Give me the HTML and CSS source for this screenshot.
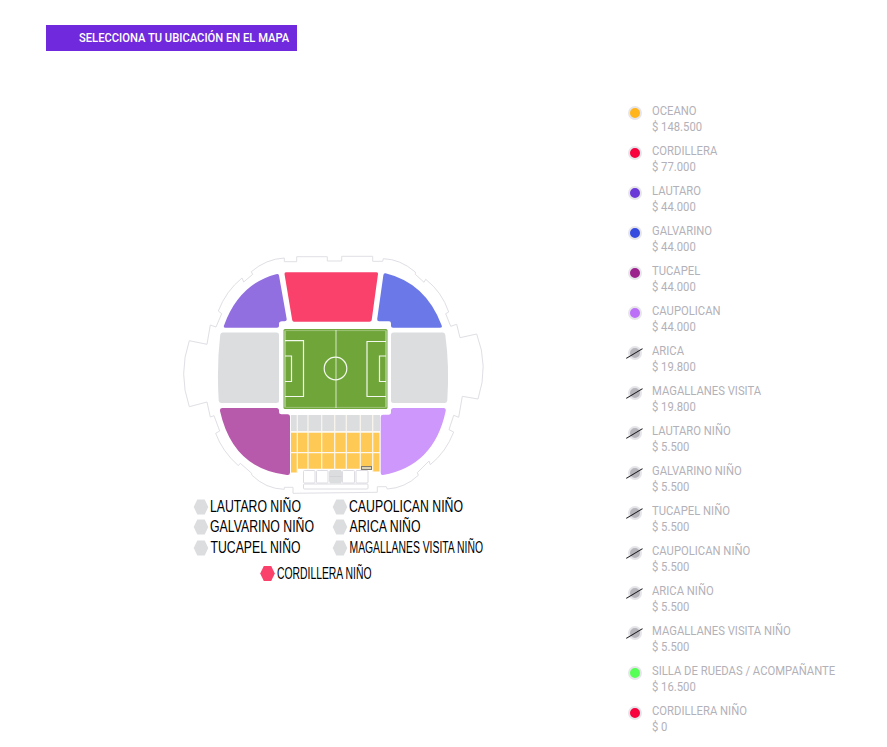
FILE: index.html
```html
<!DOCTYPE html>
<html lang="es">
<head>
<meta charset="utf-8">
<title>Selecciona tu ubicación</title>
<link rel="stylesheet" href="styles.css">
</head>
<body>
<h1 class="banner"><span class="cond">SELECCIONA TU UBICACIÓN EN EL MAPA</span></h1>
<main class="content">
<svg class="map" viewBox="180 250 310 340" width="310" height="340">
  <path class="outline" d="M341.7 261H327.3V256.7H296.7V261.7H284.3V258Q266 259 251.3 271.7L252.7 274.3L243.7 282L242 278Q226 291 218.3 311L221.7 313.7L216 327L210.3 325L207 344.3L189.3 340.7Q178 374 189.3 406.7L207 402L210.3 417L214 415.7L219.7 431L215.7 433.3Q222 451 238.3 465.7L240.3 463.3L251.7 473.3V475Q266 489 284.3 489.3V487.3H293V493.3L377.3 492.3V486.7H386.3L387.3 489Q405 488 418.3 475.3L417.3 472.7L429 461L430.3 464.7Q446 452 453.7 432L449 429.7L453.7 415.3L458.7 417.3L462.3 396.3L478 399Q489 366 476.7 334L460 337.7L456.7 324.3L450.7 326.3L445.7 313.7L448.7 312Q442 292 425.7 279.3L424 282.3L415.3 274.3V272Q400 259 383.3 258.7L382.7 261.3H372.7V256.3H341.7Z"/>
  <path fill="#926fe1" d="M276 274.2Q278.600 273.500 279 275.500L286.700 319Q287 321.300 284.500 321.300H282Q279 321.300 279 324V326Q279 327.700 277 327.700H225.500Q223.200 327.700 224 325.500Q239 284 276 274.200Z"/>
  <path fill="#f9416c" d="M286 272.300H376.500Q378.300 272.300 378 274L371.700 320Q371.400 321.700 369.500 321.700H294Q292.500 321.700 292.200 320L284.500 274Q284.300 272.300 286 272.300Z"/>
  <path fill="#6b78e8" d="M385.500 273.200Q383.700 272.800 383.400 275L377.200 319Q377 321.300 379 321.300H389Q391 321.300 391 323.500V326Q391 327.700 393 327.700H440Q442.500 327.700 441.700 325.500Q426 283 385.500 273.200Z"/>
  <path fill="#dcdddf" d="M222.500 332.500H276.500Q279 332.500 279 335V400.500Q279 403 276.500 403H221.500Q219 403 218.700 400.500Q216.600 366 220.200 335Q220.500 332.500 222.500 332.500Z"/>
  <path fill="#dcdddf" d="M393.500 332.500H443Q445 332.500 445.300 335Q449.600 366 447.300 400.500Q447 403 444.500 403H393.500Q391 403 391 400.500V335Q391 332.500 393.500 332.500Z"/>
  <path fill="#b85aab" d="M222.500 408H276.500Q279 408 279 410.500V412Q279 414.300 281.500 414.300H287.500Q290 414.300 290 417V472.500Q290 475.500 287 475Q233 469 220 411Q219.700 408 222.500 408Z"/>
  <path fill="#ce97fc" d="M393.500 408H443.500Q446.200 408 445.700 411Q434 466 383 475Q380.700 475.300 380.700 472.500V417Q380.700 414.700 383 414.700H388.500Q391 414.700 391 412V410.500Q391 408 393.500 408Z"/>

  <rect x="283.500" y="329" width="104" height="80" rx="1.500" fill="#70a53a"/>
  <g class="pitch">
    <rect x="285" y="330.500" width="101" height="77" opacity=".3"/>
    <path opacity=".65" d="M336 330V408"/>
    <circle cx="335.500" cy="368.500" r="11.300"/>
    <path d="M285 340.700H303.500V396.500H285M285 356H291.500V381.500H285M386 341.500H367V396.500H386M386 356H379.500V381.500H386"/>
    <path opacity=".4" d="M285 331V407M386 331V407"/>
  </g>

  <path fill="#dcdddf" d="M291 415H380V431H291Z"/>
  <path fill="#ffc955" d="M291 432.500H379.500V471.500H373V468.700H297V472.500H291Z"/>
  <path class="seams" d="M297.300 415V473M308 415V470M321.700 415V470M334.700 415V470M346.300 415V470M360.300 415V470M372.700 415V472M290 431.800H380M290 452.700H380"/>
  <rect x="361.500" y="466.500" width="10" height="3" fill="#d9d2b8" stroke="#807b6d"/>
  <g class="boxes">
    <rect x="303.500" y="470.500" width="11.500" height="12.500" rx="1"/>
    <rect x="316.500" y="470.500" width="11.500" height="12.500" rx="1"/>
    <rect x="342.500" y="470.500" width="12" height="12.500" rx="1"/>
    <rect x="356" y="470.500" width="12" height="12.500" rx="1"/>
    <rect x="303.500" y="484" width="64.500" height="5" rx="1"/>
  </g>
  <path fill="#dcdddf" d="M330 470H341L342 472V481L341 483.500H330L329 481V472Z"/>
  <path stroke="#cfcfd4" stroke-width=".7" d="M329.500 476.500H341.500"/>

  <g fill="#dcdddf">
    <path id="hex" d="M197.300 499.500H204.700L208.300 507L204.700 514.500H197.300L193.700 507Z"/>
    <use href="#hex" y="20"/><use href="#hex" y="41"/>
    <use href="#hex" x="139"/><use href="#hex" x="139" y="20"/><use href="#hex" x="139" y="41"/>
  </g>
  <path fill="#f9416c" d="M263.800 566H271.200L274.800 573.500L271.200 581H263.800L260.200 573.500Z"/>
  <g class="labels">
    <text x="210" y="512" textLength="91" lengthAdjust="spacingAndGlyphs">LAUTARO NIÑO</text>
    <text x="210" y="532" textLength="104" lengthAdjust="spacingAndGlyphs">GALVARINO NIÑO</text>
    <text x="210.500" y="553" textLength="90" lengthAdjust="spacingAndGlyphs">TUCAPEL NIÑO</text>
    <text x="349" y="512" textLength="114" lengthAdjust="spacingAndGlyphs">CAUPOLICAN NIÑO</text>
    <text x="349.500" y="532" textLength="71" lengthAdjust="spacingAndGlyphs">ARICA NIÑO</text>
    <text x="349.500" y="553" textLength="133.500" lengthAdjust="spacingAndGlyphs">MAGALLANES VISITA NIÑO</text>
    <text x="277" y="579" textLength="94.500" lengthAdjust="spacingAndGlyphs">CORDILLERA NIÑO</text>
  </g>
</svg>
<ul class="legend">
  <li><i class="dot oceano"></i><div class="cond">OCEANO<br>$ 148.500</div></li>
  <li><i class="dot cordillera"></i><div class="cond">CORDILLERA<br>$ 77.000</div></li>
  <li><i class="dot lautaro"></i><div class="cond">LAUTARO<br>$ 44.000</div></li>
  <li><i class="dot galvarino"></i><div class="cond">GALVARINO<br>$ 44.000</div></li>
  <li><i class="dot tucapel"></i><div class="cond">TUCAPEL<br>$ 44.000</div></li>
  <li><i class="dot caupolican"></i><div class="cond">CAUPOLICAN<br>$ 44.000</div></li>
  <li><i class="dot off"></i><div class="cond">ARICA<br>$ 19.800</div></li>
  <li><i class="dot off"></i><div class="cond">MAGALLANES VISITA<br>$ 19.800</div></li>
  <li><i class="dot off"></i><div class="cond">LAUTARO NIÑO<br>$ 5.500</div></li>
  <li><i class="dot off"></i><div class="cond">GALVARINO NIÑO<br>$ 5.500</div></li>
  <li><i class="dot off"></i><div class="cond">TUCAPEL NIÑO<br>$ 5.500</div></li>
  <li><i class="dot off"></i><div class="cond">CAUPOLICAN NIÑO<br>$ 5.500</div></li>
  <li><i class="dot off"></i><div class="cond">ARICA NIÑO<br>$ 5.500</div></li>
  <li><i class="dot off"></i><div class="cond">MAGALLANES VISITA NIÑO<br>$ 5.500</div></li>
  <li><i class="dot silla"></i><div class="cond">SILLA DE RUEDAS / ACOMPAÑANTE<br>$ 16.500</div></li>
  <li><i class="dot cordillera"></i><div class="cond">CORDILLERA NIÑO<br>$ 0</div></li>
</ul>
</main>
</body>
</html>
```
FILE: styles.css
```css
* { box-sizing: border-box; }
body {
  margin: 0;
  padding: 25px 0 0 46px;
  height: 747px;
  overflow: hidden;
  background: #fff;
  font-family: Roboto, "Liberation Sans", sans-serif;
}
.cond {
  display: inline-block;
  transform: scaleX(.866);
  transform-origin: 0 50%;
  white-space: nowrap;
}
.banner {
  margin: 0;
  width: 251px;
  height: 26px;
  padding-left: 32.5px;
  background: #7029dc;
  color: #fff;
  font-size: 13px;
  font-weight: 500;
  line-height: 26px;
}
.banner .cond { transform: scaleX(.861); }
.content {
  display: flex;
  padding-left: 134px;
}
.map {
  flex: none;
  margin-top: 199px;
  overflow: visible;
}
.legend {
  list-style: none;
  margin: 52px 0 0 138px;
  padding: 0;
  color: #b3b1b8;
  font-size: 13px;
  line-height: 16px;
}
.legend li {
  display: flex;
  height: 40px;
}
.dot {
  position: relative;
  flex: none;
  width: 14px;
  height: 14px;
  margin: 3px 10px 0 0;
  border: 2px solid #e6e6ea;
  border-radius: 50%;
}
.oceano { background: #ffb51b; }
.cordillera { background: #f8003d; }
.lautaro { background: #6b38d8; }
.galvarino { background: #354be0; }
.tucapel { background: #9d218d; }
.caupolican { background: #bc70f8; }
.silla { background: #55ff55; }
.off { background: #b6b5bb; }
.off::after {
  content: "";
  position: absolute;
  left: -5px;
  top: 5px;
  width: 19px;
  height: 1.3px;
  background: #17171b;
  transform: rotate(-31deg);
}
.outline { fill: none; stroke: #dfdfe5; stroke-width: 1; }
.pitch { fill: none; stroke: #f4f9ef; stroke-width: 1.2; }
.seams { fill: none; stroke: #fbf7ee; stroke-width: 1.2; }
.boxes { fill: #fff; stroke: #dcdce2; stroke-width: 1; }
.labels {
  font-family: "Liberation Sans", Arial, sans-serif;
  font-size: 16px;
  fill: #000;
}
```
